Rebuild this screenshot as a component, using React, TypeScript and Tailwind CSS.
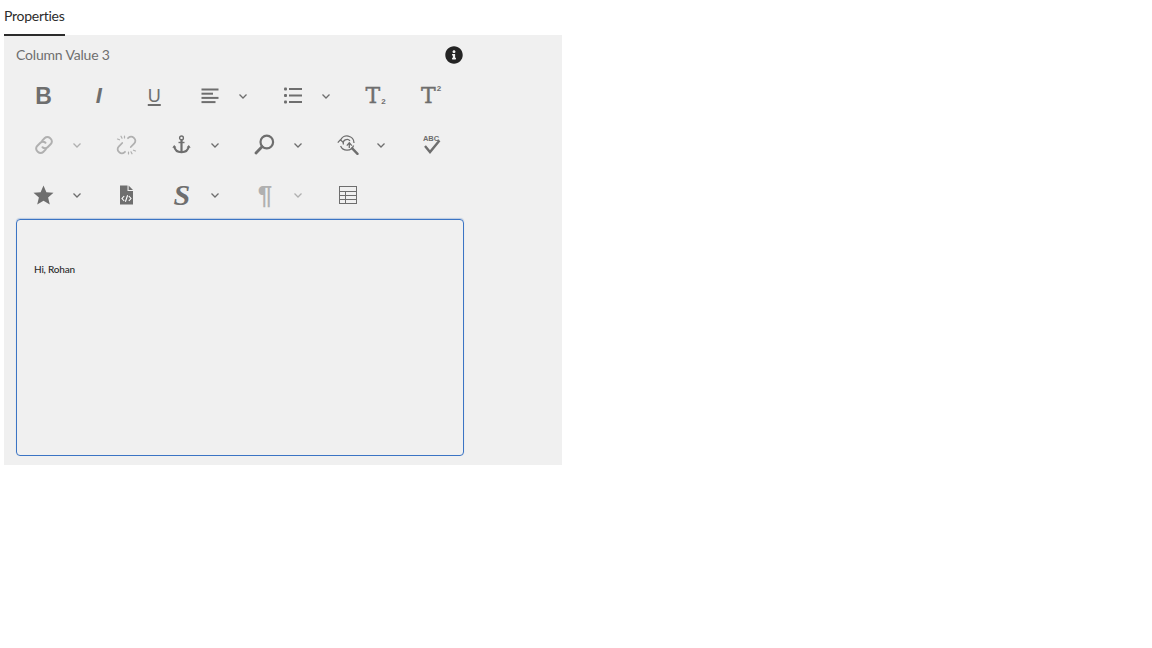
import React from "react";
import { FaInfoCircle } from "react-icons/fa";

const G = "#6e6e6e";
const L = "#b0b0b0";

function Chevron({ light }: { light?: boolean }) {
  return (
    <svg width="10" height="10" viewBox="0 0 10 10" fill="none" stroke={light ? L : "#6e6e6e"} strokeWidth="1.3">
      <path d="M1.5 3.5 5 7l3.5-3.5" />
    </svg>
  );
}

function Btn({ children, chevron, light }: { children: React.ReactNode; chevron?: boolean; light?: boolean }) {
  return (
    <div className={chevron ? "flex h-full w-[83px] items-center" : "flex h-full w-[55.4px] items-center"}>
      <div className="flex w-[55px] shrink-0 items-center justify-center">{children}</div>
      {chevron && (
        <div className="flex w-[11px] justify-center">
          <Chevron light={light} />
        </div>
      )}
    </div>
  );
}

const AlignIcon = () => (
  <svg width="18" height="16" viewBox="0 0 18 16" fill={G}>
    <rect x="0.5" y="0.5" width="17" height="2" />
    <rect x="0.5" y="4.7" width="11.5" height="2" />
    <rect x="0.5" y="8.9" width="17" height="2" />
    <rect x="0.5" y="13.1" width="14" height="2" />
  </svg>
);

const ListIcon = () => (
  <svg width="18" height="17" viewBox="0 0 18 17" fill={G}>
    <rect x="0" y="0.5" width="3" height="3" rx="1" />
    <rect x="0" y="7" width="3" height="3" rx="1" />
    <rect x="0" y="13.5" width="3" height="3" rx="1" />
    <rect x="5" y="1" width="13" height="2" />
    <rect x="5" y="7.5" width="13" height="2" />
    <rect x="5" y="14" width="13" height="2" />
  </svg>
);

const LinkIcon = () => (
  <svg width="20" height="20" viewBox="0 0 20 20" fill="none" stroke={L} strokeWidth="2" strokeLinecap="round">
    <path d="M8.2 5.6 10.8 3a3.6 3.6 0 0 1 5.1 0l.9.9a3.6 3.6 0 0 1 0 5.1l-3.2 3.2a3.6 3.6 0 0 1-5.1 0" />
    <path d="M11.8 14.4 9.2 17a3.6 3.6 0 0 1-5.1 0l-.9-.9a3.6 3.6 0 0 1 0-5.1l3.2-3.2a3.6 3.6 0 0 1 5.1 0" />
  </svg>
);

const UnlinkIcon = () => (
  <svg width="21" height="20" viewBox="0 0 21 20" fill="none" stroke={L} strokeWidth="1.8" strokeLinecap="round">
    <path d="M12 3.2 12.6 2.6a3.5 3.5 0 0 1 5 0l.7.7a3.5 3.5 0 0 1 0 5L14.8 12" />
    <path d="M9 16.8l-.6.6a3.5 3.5 0 0 1-5 0l-.7-.7a3.5 3.5 0 0 1 0-5L6.2 8" />
    <path strokeWidth="1.2" d="M5 1.2l1 2M1.5 4l2 .8M8.5 1v2M16 18.8l-1-2M19.5 16l-2-.8M12.5 19v-2" />
  </svg>
);

const AnchorIcon = () => (
  <svg width="19" height="19" viewBox="0 0 19 19" fill="none" stroke={G}>
    <circle cx="9.5" cy="2.9" r="1.9" strokeWidth="1.4" />
    <path d="M9.5 5v12.5" strokeWidth="2.2" />
    <path d="M6.5 7.5h6" strokeWidth="1.4" />
    <path d="M2.2 11.5c.5 3.4 3.5 5.6 7.3 5.8 3.8-.2 6.8-2.4 7.3-5.8" strokeWidth="1.9" />
    <path d="M0.3 12.8 2.2 10 4.4 12.4ZM18.7 12.8 16.8 10 14.6 12.4Z" fill={G} stroke="none" />
  </svg>
);

const SearchIcon = () => (
  <svg width="21" height="21" viewBox="0 0 21 21" fill="none" stroke={G}>
    <circle cx="12.8" cy="8" r="6.3" strokeWidth="2.2" />
    <path d="M8 12.8 2 19" strokeWidth="2.8" strokeLinecap="round" />
  </svg>
);

const ReplaceIcon = () => (
  <svg width="22" height="20" viewBox="0 0 22 20" fill="none" stroke={G}>
    <path d="M3.4 5.6A7 7 0 0 1 17 8" strokeWidth="1.3" />
    <path d="M0.8 7.6 3.3 4.8 6.2 7.2" strokeWidth="1.3" />
    <path d="M16.6 10.5A7 7 0 0 1 3.6 11" strokeWidth="1.3" />
    <path d="M6.5 9.5A3.8 3.8 0 0 1 13 5.8" strokeWidth="1.3" />
    <path d="M9.8 10.6 12.3 7.8 14.8 10.6M12.3 7.8V13" strokeWidth="1.3" />
    <path d="M15.2 13.3 20.5 18.8" strokeWidth="2.4" strokeLinecap="round" />
  </svg>
);

const SpellIcon = () => (
  <div className="relative ml-[1px] h-[20px] w-[19px]">
    <span className="absolute left-[1px] top-[-1px] text-[7.5px] font-bold leading-[10px] text-[#6e6e6e] [font-family:'Liberation_Sans',sans-serif]">ABC</span>
    <svg className="absolute left-0 top-0" width="19" height="20" viewBox="0 0 19 20" fill="none" stroke={G} strokeWidth="2.4">
      <path d="M3 11 8 17 17.5 5.5" />
    </svg>
  </div>
);

const FileCodeIcon = () => (
  <svg width="15" height="20" viewBox="0 0 15 20">
    <path d="M1 0.5h7.5v5.5H14V19.5H1Z" fill={G} />
    <path d="M9.6 0.5 14 4.9H9.6Z" fill={G} />
    <path d="M5.2 11 3 13.5l2.2 2.5M9.8 11 12 13.500l-2.2 2.500M8.6 10.300l-2.2 6.400" fill="none" stroke="#fff" strokeWidth="1.1" />
  </svg>
);

const StarIcon = () => (
  <svg width="21" height="20" viewBox="0 0 21 20" fill={G}>
    <path d="M10.5 0.5 13.4 7.2 20.5 7.8 15.1 12.5 16.8 19.5 10.5 15.7 4.2 19.5 5.9 12.5 0.5 7.8 7.6 7.2Z" />
  </svg>
);

const TableIcon = () => (
  <svg width="18" height="18" viewBox="0 0 18 18" fill="none" stroke={G} strokeWidth="1">
    <rect x="0.5" y="0.5" width="17" height="17" />
    <path d="M0.5 5.5h17M0.5 9.5h17M0.5 13.5h17M6.5 5.5v12" />
  </svg>
);

const serif = "[font-family:'DejaVu_Serif',serif]";
const times = "[font-family:'Liberation_Serif',serif]";
const sans = "[font-family:'Liberation_Sans',sans-serif]";

export default function App() {
  return (
    <div className="min-h-[648px] bg-white pl-[4px] [font-family:'Lato',sans-serif]">
      <div className="relative z-10 h-[36px] w-[61px] whitespace-nowrap border-b-2 border-[#2c2c2c] pt-[6px] text-[14px] leading-[20px] tracking-[-0.27px] text-[#2c2c2c]">
        Properties
      </div>
      <div className="mt-[-1px] h-[430px] w-[558px] bg-[#f0f0f0] pl-[12px] pr-[98px]">
        <div className="flex h-[36.3px] items-start justify-between pt-[10px]">
          <span className="text-[14px] leading-[20px] tracking-[-0.18px] text-[#6e6e6e]">Column Value 3</span>
          <FaInfoCircle className="mr-[1px] mt-[1px] text-[18px] text-[#242424]" />
        </div>
        <div className="flex h-[49px]">
          <Btn><span className={`${sans} mt-[2px] text-[23px] font-bold leading-none text-[#6e6e6e]`}>B</span></Btn>
          <Btn><span className={`${sans} mt-[1px] text-[22px] font-bold italic leading-none text-[#6e6e6e]`}>I</span></Btn>
          <Btn><span className={`${sans} text-[18px] leading-none text-[#6e6e6e] underline decoration-[1.5px] underline-offset-[2px]`}>U</span></Btn>
          <Btn chevron><AlignIcon /></Btn>
          <Btn chevron><ListIcon /></Btn>
          <Btn><span className={`${serif} flex items-end text-[#6e6e6e]`}><span className="text-[22px] leading-none [-webkit-text-stroke:0.4px_#6e6e6e]">T</span><span className={`${sans} mb-[1px] ml-[1px] text-[8px] font-bold leading-none`}>2</span></span></Btn>
          <Btn><span className={`${serif} flex items-start text-[#6e6e6e]`}><span className="text-[22px] leading-none [-webkit-text-stroke:0.4px_#6e6e6e]">T</span><span className={`${sans} ml-[1px] text-[8px] font-bold leading-none`}>2</span></span></Btn>
        </div>
        <div className="flex h-[49px]">
          <Btn chevron light><LinkIcon /></Btn>
          <Btn><UnlinkIcon /></Btn>
          <Btn chevron><AnchorIcon /></Btn>
          <Btn chevron><SearchIcon /></Btn>
          <Btn chevron><ReplaceIcon /></Btn>
          <Btn><SpellIcon /></Btn>
        </div>
        <div className="flex h-[51px]">
          <Btn chevron><StarIcon /></Btn>
          <Btn><FileCodeIcon /></Btn>
          <Btn chevron><span className={`${times} text-[30px] font-bold italic leading-none text-[#6e6e6e]`}>S</span></Btn>
          <Btn chevron light><span className={`${sans} text-[26px] font-bold leading-none text-[#b0b0b0]`}>¶</span></Btn>
          <Btn><TableIcon /></Btn>
        </div>
        <div className="mt-[-1.3px] h-[237px] w-[448px] rounded-[4px] border border-[#3b74c4] px-[17px] pt-[42px] shadow-[0_-1px_1px_rgba(63,116,189,0.3)]">
          <p className="text-[10px] font-medium leading-[14px] tracking-[-0.2px] text-[#2c2c2c]">Hi, Rohan</p>
        </div>
      </div>
    </div>
  );
}
